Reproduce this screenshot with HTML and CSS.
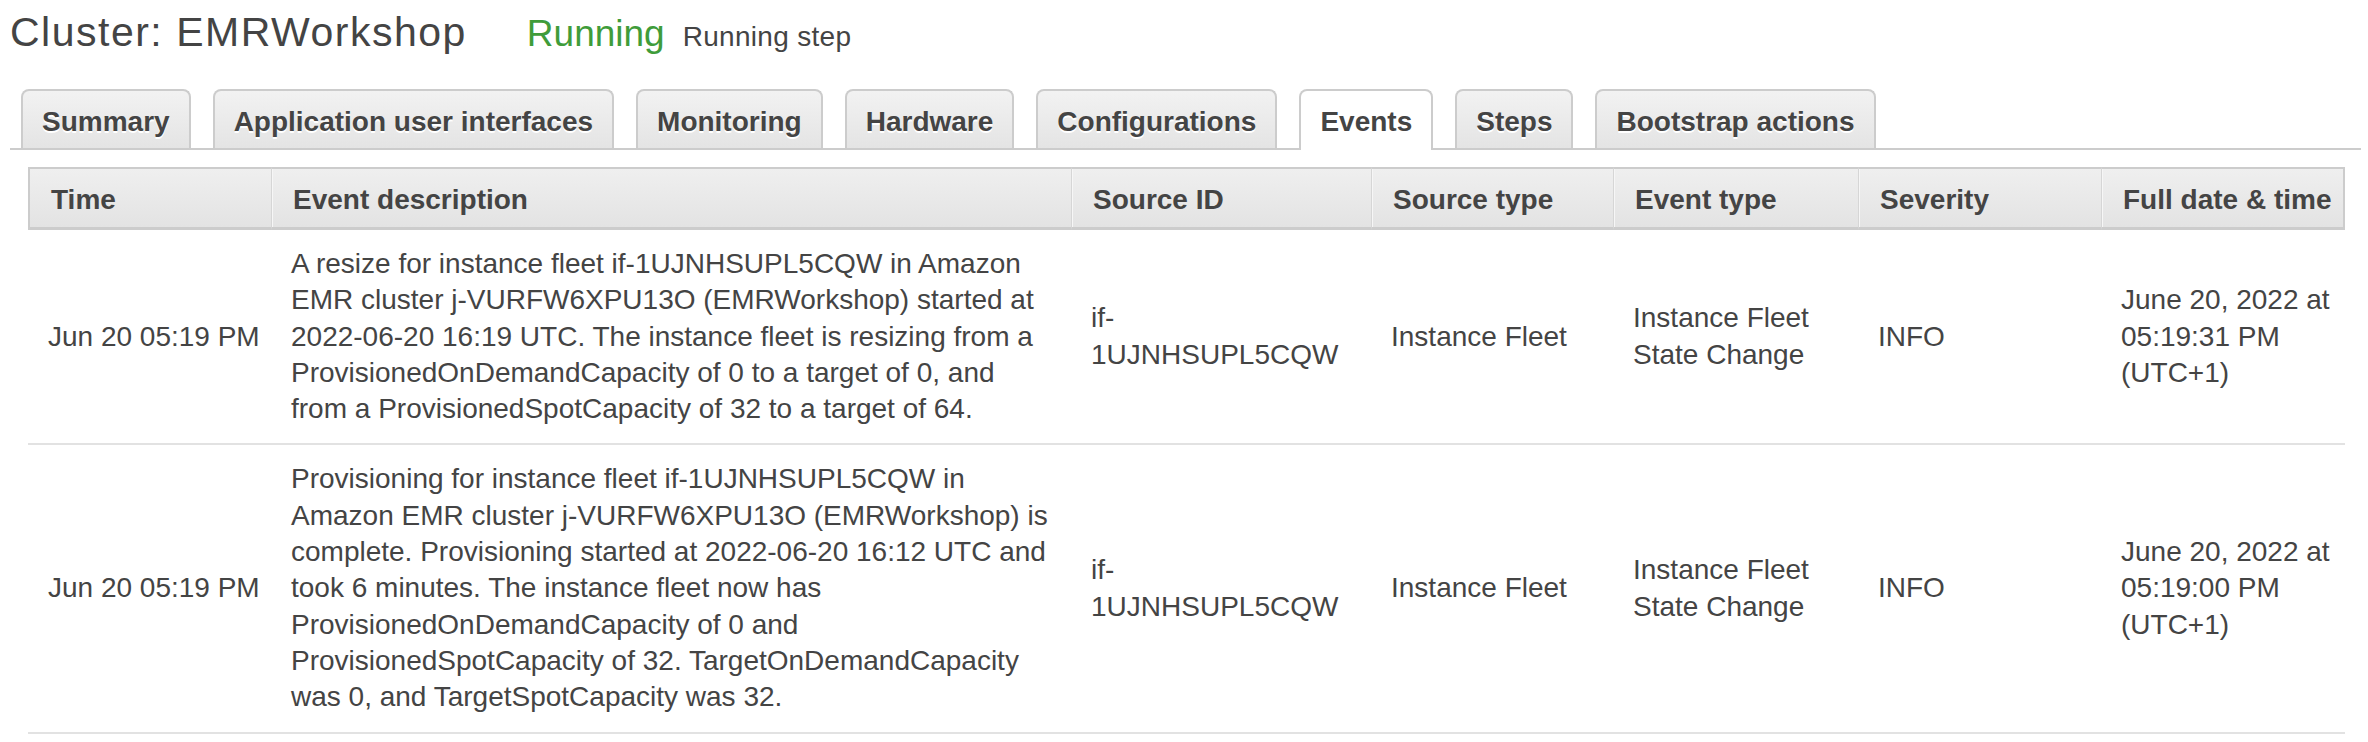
FILE: index.html
```html
<!DOCTYPE html>
<html lang="en">
<head>
<meta charset="utf-8">
<title>Cluster: EMRWorkshop</title>
<link rel="stylesheet" href="styles.css">
</head>
<body>
<div class="page">
  <div class="cluster-head">
    <h1 class="title">Cluster: EMRWorkshop</h1>
    <span class="state">Running</span>
    <span class="substate">Running step</span>
  </div>

  <div class="tabs">
    <div class="tab">Summary</div>
    <div class="tab">Application user interfaces</div>
    <div class="tab">Monitoring</div>
    <div class="tab">Hardware</div>
    <div class="tab">Configurations</div>
    <div class="tab active">Events</div>
    <div class="tab">Steps</div>
    <div class="tab">Bootstrap actions</div>
  </div>

  <table class="events">
    <colgroup>
      <col class="c-time">
      <col class="c-desc">
      <col class="c-src">
      <col class="c-stype">
      <col class="c-etype">
      <col class="c-sev">
      <col class="c-full">
    </colgroup>
    <thead>
      <tr>
        <th>Time</th>
        <th>Event description</th>
        <th>Source ID</th>
        <th>Source type</th>
        <th>Event type</th>
        <th>Severity</th>
        <th>Full date &amp; time</th>
      </tr>
    </thead>
    <tbody>
      <tr>
        <td>Jun 20 05:19 PM</td>
        <td>A resize for instance fleet if-1UJNHSUPL5CQW in Amazon<br>EMR cluster j-VURFW6XPU13O (EMRWorkshop) started at<br>2022-06-20 16:19 UTC. The instance fleet is resizing from a<br>ProvisionedOnDemandCapacity of 0 to a target of 0, and<br>from a ProvisionedSpotCapacity of 32 to a target of 64.</td>
        <td>if-<br>1UJNHSUPL5CQW</td>
        <td>Instance Fleet</td>
        <td>Instance Fleet<br>State Change</td>
        <td>INFO</td>
        <td>June 20, 2022 at<br>05:19:31 PM<br>(UTC+1)</td>
      </tr>
      <tr>
        <td>Jun 20 05:19 PM</td>
        <td>Provisioning for instance fleet if-1UJNHSUPL5CQW in<br>Amazon EMR cluster j-VURFW6XPU13O (EMRWorkshop) is<br>complete. Provisioning started at 2022-06-20 16:12 UTC and<br>took 6 minutes. The instance fleet now has<br>ProvisionedOnDemandCapacity of 0 and<br>ProvisionedSpotCapacity of 32. TargetOnDemandCapacity<br>was 0, and TargetSpotCapacity was 32.</td>
        <td>if-<br>1UJNHSUPL5CQW</td>
        <td>Instance Fleet</td>
        <td>Instance Fleet<br>State Change</td>
        <td>INFO</td>
        <td>June 20, 2022 at<br>05:19:00 PM<br>(UTC+1)</td>
      </tr>
    </tbody>
  </table>
</div>
</body>
</html>
```

FILE: styles.css
```css
html, body {
  margin: 0;
  padding: 0;
  background: #ffffff;
}

body {
  font-family: "Liberation Sans", Arial, Helvetica, sans-serif;
  color: #444444;
}

.page {
  padding: 8px 7px 0 10px;
}

/* ---------- header ---------- */
.cluster-head {
  display: flex;
  align-items: baseline;
  height: 48px;
}

.title {
  margin: 0;
  font-size: 41px;
  font-weight: normal;
  letter-spacing: 1.5px;
  line-height: 48px;
  color: #444444;
}

.state {
  margin-left: 60px;
  font-size: 37px;
  line-height: 48px;
  color: #3f9c3a;
}

.substate {
  margin-left: 18px;
  font-size: 28px;
  letter-spacing: 0.3px;
  line-height: 48px;
  color: #444444;
}

/* ---------- tabs ---------- */
.tabs {
  display: flex;
  align-items: flex-end;
  gap: 22px;
  margin-top: 33px;
  padding-left: 11px;
  border-bottom: 2px solid #cccccc;
}

.tab {
  box-sizing: border-box;
  height: 59px;
  padding: 5px 19px 0;
  line-height: 52px;
  font-size: 28px;
  font-weight: bold;
  color: #444444;
  text-shadow: 0 2px 0 #ffffff;
  white-space: nowrap;
  background: linear-gradient(#f2f2f2, #e4e4e4);
  border: 2px solid #cccccc;
  border-bottom: 0;
  border-radius: 8px 8px 0 0;
}

.tab.active {
  height: 61px;
  margin-bottom: -2px;
  background: #ffffff;
}

/* ---------- table ---------- */
.events {
  margin: 17px 0 0 18px;
  width: 2317px;
  table-layout: fixed;
  border-collapse: separate;
  border-spacing: 0;
  font-size: 28px;
  color: #444444;
}

.c-time  { width: 243px; }
.c-desc  { width: 800px; }
.c-src   { width: 300px; }
.c-stype { width: 242px; }
.c-etype { width: 245px; }
.c-sev   { width: 243px; }
.c-full  { width: 244px; }

.events th {
  padding: 13px 10px 9px 21px;
  line-height: 36px;
  text-align: left;
  font-weight: bold;
  white-space: nowrap;
  background: linear-gradient(#efefef, #e3e3e3);
  border-top: 2px solid #cccccc;
  border-bottom: 3px solid #cccccc;
  border-left: 1px solid #d6d6d6;
  box-shadow: inset 1px 0 0 #f6f6f6;
}

.events th:first-child {
  border-left: 2px solid #cccccc;
  box-shadow: none;
}

.events th:last-child {
  border-right: 2px solid #cccccc;
}

.events td {
  padding: 16px 10px 16px 20px;
  line-height: 36.3px;
  vertical-align: middle;
  white-space: nowrap;
  border-bottom: 2px solid #e2e2e2;
}
```
